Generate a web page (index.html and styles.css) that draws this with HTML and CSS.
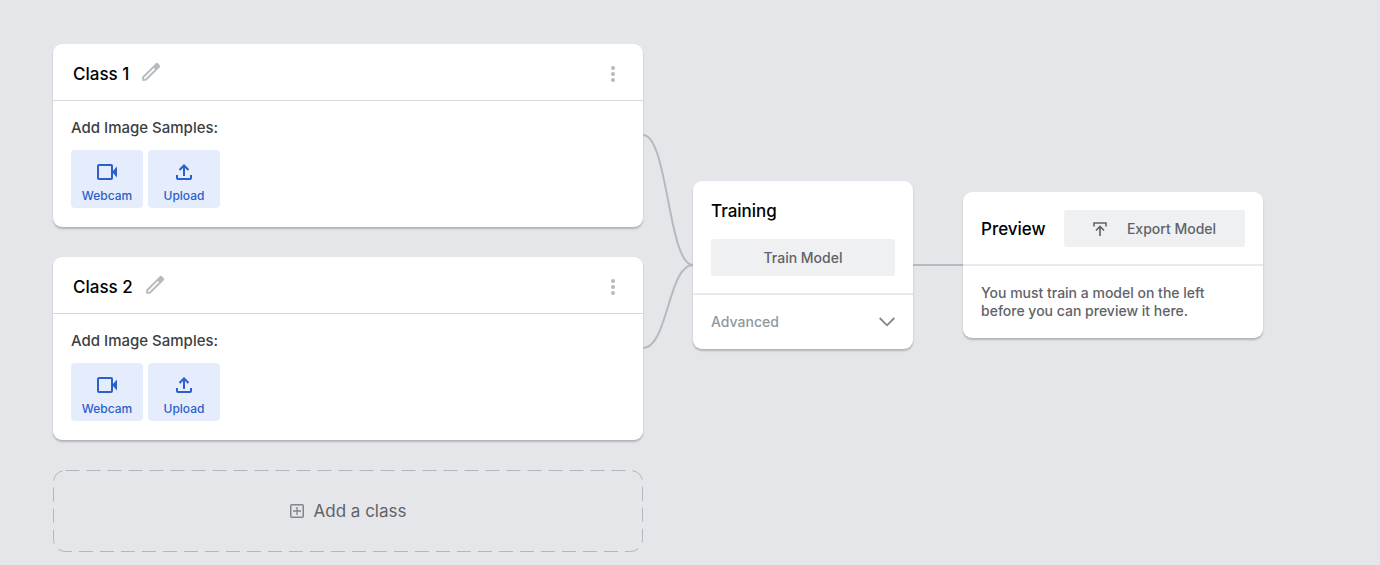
FILE: index.html
```html
<!DOCTYPE html>
<html lang="en">
<head>
<meta charset="utf-8">
<title>Image model</title>
<link rel="stylesheet" href="styles.css">
</head>
<body>
<svg class="symbols" aria-hidden="true">
  <symbol id="pencil" viewBox="0 0 20 20"><path d="M1.2 18.8v-4L14.600 1.400a1.700 1.700 0 0 1 2.400 0l1.600 1.600a1.700 1.700 0 0 1 0 2.400L5.200 18.800zM3 17h1.200L14 7.200 12.800 6 3 15.800z" fill="currentColor" fill-rule="evenodd"/></symbol>
  <symbol id="dots" viewBox="0 0 6 18"><circle cx="3" cy="3" r="2" fill="currentColor"/><circle cx="3" cy="9" r="2" fill="currentColor"/><circle cx="3" cy="15" r="2" fill="currentColor"/></symbol>
  <symbol id="webcam" viewBox="0 0 22 18"><rect x="2" y="2" width="14" height="14" rx="1" fill="none" stroke="currentColor" stroke-width="2"/><path d="M16 9l5-5.500v11z" fill="currentColor"/></symbol>
  <symbol id="upload" viewBox="0 0 18 18"><path d="M2 12v3q0 1 1 1h12q1 0 1-1v-3M9 13V3M4.500 7L9 2.500 13.500 7" fill="none" stroke="currentColor" stroke-width="2"/></symbol>
</svg>
<main class="flow">
  <div class="classes">
    <section class="card class-card">
      <header class="class-head">
        <h2 class="title">Class 1</h2>
        <button class="icon-button" aria-label="Rename Class 1"><svg class="pencil"><use href="#pencil"/></svg></button>
        <button class="icon-button menu" aria-label="Class 1 options"><svg class="dots"><use href="#dots"/></svg></button>
      </header>
      <div class="class-body">
        <p class="label">Add Image Samples:</p>
        <div class="sources">
          <button class="source"><svg class="webcam"><use href="#webcam"/></svg>Webcam</button>
          <button class="source"><svg class="upload"><use href="#upload"/></svg>Upload</button>
        </div>
      </div>
    </section>
    <section class="card class-card">
      <header class="class-head">
        <h2 class="title">Class 2</h2>
        <button class="icon-button" aria-label="Rename Class 2"><svg class="pencil"><use href="#pencil"/></svg></button>
        <button class="icon-button menu" aria-label="Class 2 options"><svg class="dots"><use href="#dots"/></svg></button>
      </header>
      <div class="class-body">
        <p class="label">Add Image Samples:</p>
        <div class="sources">
          <button class="source"><svg class="webcam"><use href="#webcam"/></svg>Webcam</button>
          <button class="source"><svg class="upload"><use href="#upload"/></svg>Upload</button>
        </div>
      </div>
    </section>
    <button class="add-class">
      <svg class="outline" aria-hidden="true"><rect class="dashes" x="0.5" y="0.5" rx="12"/></svg>
      <svg class="plus" viewBox="0 0 14 14"><rect x=".75" y=".75" width="12.500" height="12.500" rx="1" fill="none" stroke="currentColor" stroke-width="1.500"/><path d="M7 3v8M3 7h8" stroke="currentColor" stroke-width="1.300"/></svg>
      <span>Add a class</span>
    </button>
  </div>
  <svg class="join" viewBox="0 0 50 216" aria-hidden="true"><path d="M0 1C25 1 25 131 50 131M0 214C25 214 25 131 50 131"/></svg>
  <div class="pipeline">
    <section class="card training">
      <div class="training-main">
        <h2 class="title">Training</h2>
        <button class="action">Train Model</button>
      </div>
      <button class="advanced">Advanced<svg class="chevron" viewBox="0 0 16 10"><path d="M.7 1L8 8.300 15.300 1" fill="none" stroke="currentColor" stroke-width="1.800"/></svg></button>
    </section>
    <div class="line"></div>
    <section class="card preview">
      <header class="preview-head">
        <h2 class="title">Preview</h2>
        <button class="action export"><svg class="export-icon" viewBox="0 0 14 14"><path d="M1 4.500V1h12v3.500M7 14V5M3 8.500l4-4 4 4" fill="none" stroke="currentColor" stroke-width="1.600"/></svg>Export Model</button>
      </header>
      <p class="note">You must train a model on the left before you can preview it here.</p>
    </section>
  </div>
</main>
</body>
</html>
```
FILE: styles.css
```css
* { box-sizing: border-box; }
body { margin: 0; background: #e5e6ea; font-family: Inter, "Liberation Sans", sans-serif; font-weight: 500; color: #3c4043; }
button { font: inherit; color: inherit; background: none; border: 0; padding: 0; cursor: pointer; }
h2, p { margin: 0; }
svg { display: block; flex: none; }
.symbols { position: absolute; width: 0; height: 0; }

.flow { display: flex; align-items: flex-start; padding: 44px 117px 13px 53px; }
.classes { flex: 1; min-width: 280px; display: flex; flex-direction: column; gap: 30px; }
.card { background: #fff; border-radius: 9px; box-shadow: 0 2px 2px rgba(60, 64, 67, 0.3); }
.title { font-size: 17px; line-height: 24px; font-weight: 500; color: #000; }

.class-head { display: flex; align-items: flex-end; gap: 12px; padding: 18px 20px 14px; border-bottom: 1px solid #d6d8db; }
.icon-button { color: #b6b9bd; }
.icon-button:not(.menu) { padding-bottom: 4px; }
.pencil { width: 20px; height: 20px; }
.menu { margin-left: auto; padding: 3px 7px; }
.dots { width: 6px; height: 18px; }
.class-body { padding: 17px 18px 19px; }
.label { font-size: 15px; line-height: 20px; margin-bottom: 12px; }
.sources { display: flex; gap: 5px; }
.source { width: 72px; height: 58px; display: flex; flex-direction: column; align-items: center; gap: 6px; padding-top: 13px; border-radius: 4px; background: #e5edfd; color: #2b5fcb; font-size: 12px; line-height: 18px; }
.webcam { width: 22px; height: 18px; }
.upload { width: 18px; height: 18px; }

.add-class { position: relative; height: 82px; display: flex; align-items: center; justify-content: center; gap: 10px; color: #5f6368; font-size: 17px; line-height: 24px; font-weight: 400; }
.outline { position: absolute; inset: 0; width: 100%; height: 100%; }
.dashes { width: calc(100% - 1px); height: calc(100% - 1px); fill: none; stroke: #b3b6ba; stroke-width: 1; stroke-dasharray: 14 7; }
.plus { width: 14px; height: 14px; color: #80868b; }

.join { width: 50px; height: 216px; margin-top: 90px; fill: none; stroke: #b6b9bd; stroke-width: 2; }
.pipeline { display: flex; align-items: center; padding-top: 137px; }
.line { width: 50px; height: 2px; background: #b6b9bd; }

.training { width: 220px; }
.training-main { padding: 18px 18px 17px; border-bottom: 2px solid #e8eaed; }
.action { display: flex; align-items: center; justify-content: center; width: 100%; height: 37px; border-radius: 3px; background: #eff0f2; color: #5f6368; font-size: 14px; line-height: 20px; }
.training .action { margin-top: 16px; }
.advanced { display: flex; align-items: center; justify-content: space-between; width: 100%; padding: 17px 18px; color: #9097a0; font-size: 14px; line-height: 20px; }
.chevron { width: 16px; height: 10px; color: #80868b; }

.preview { width: 300px; }
.preview-head { display: flex; align-items: center; justify-content: space-between; padding: 18px 18px 17px; border-bottom: 2px solid #e8eaed; }
.export { width: 181px; gap: 20px; }
.export-icon { width: 14px; height: 14px; }
.note { padding: 18px; font-size: 14px; line-height: 18px; color: #5f6368; }
```
